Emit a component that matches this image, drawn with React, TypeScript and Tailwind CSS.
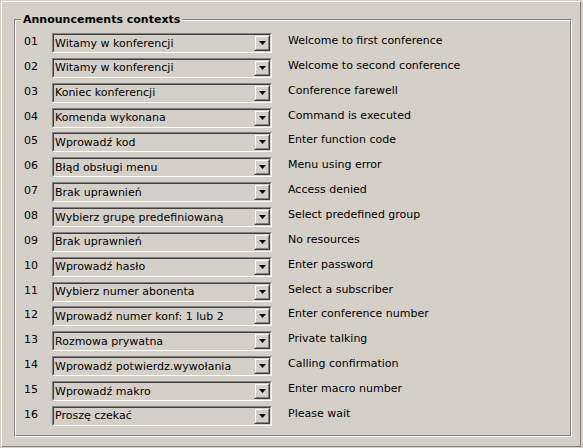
const ROWS: [string, string, string][] = [
  ['01', 'Witamy w konferencji', 'Welcome to first conference'],
  ['02', 'Witamy w konferencji', 'Welcome to second conference'],
  ['03', 'Koniec konferencji', 'Conference farewell'],
  ['04', 'Komenda wykonana', 'Command is executed'],
  ['05', 'Wprowadź kod', 'Enter function code'],
  ['06', 'Błąd obsługi menu', 'Menu using error'],
  ['07', 'Brak uprawnień', 'Access denied'],
  ['08', 'Wybierz grupę predefiniowaną', 'Select predefined group'],
  ['09', 'Brak uprawnień', 'No resources'],
  ['10', 'Wprowadź hasło', 'Enter password'],
  ['11', 'Wybierz numer abonenta', 'Select a subscriber'],
  ['12', 'Wprowadź numer konf: 1 lub 2', 'Enter conference number'],
  ['13', 'Rozmowa prywatna', 'Private talking'],
  ['14', 'Wprowadź potwierdz.wywołania', 'Calling confirmation'],
  ['15', 'Wprowadź makro', 'Enter macro number'],
  ['16', 'Proszę czekać', 'Please wait'],
]

function Combo({ value }: { value: string }) {
  return (
    <div className="w-[220px] h-[20px] border-t border-l border-[#808080] border-r border-b border-r-white border-b-white">
      <div className="h-full flex items-center border-t border-l border-[#404040] border-r border-b border-r-[#d4d0c8] border-b-[#d4d0c8] bg-[#d4d0c8]">
        <div className="flex-1 pl-px truncate leading-none">{value}</div>
        <div className="w-[16px] h-[16px] border-t border-l border-[#d4d0c8] border-r border-b border-r-[#404040] border-b-[#404040]">
          <div className="w-full h-full flex items-center justify-center border-t border-l border-white border-r border-b border-r-[#808080] border-b-[#808080]">
            <svg width="7" height="4" viewBox="0 0 7 4">
              <polygon points="0,0 7,0 3.5,4" fill="#000" />
            </svg>
          </div>
        </div>
      </div>
    </div>
  )
}

export default function App() {
  return (
    <div
      className="w-[583px] h-[448px] bg-[#d4d0c8] pt-px pl-px text-[11px] text-black"
      style={{ fontFamily: '"DejaVu Sans", Verdana, sans-serif' }}
    >
      <div className="w-[580px] h-[446px] border-t border-l border-white border-r border-b border-r-[#808080] border-b-[#808080]">
        <div className="relative ml-[12px] mt-[17px] w-[558px] h-[418px] border-t border-l border-[#808080] border-r border-b border-r-white border-b-white">
          <div className="w-full h-full border-t border-l border-white border-r border-b border-r-[#808080] border-b-[#808080] pl-[8px] pt-[12px]">
            {ROWS.map(([num, value, label]) => (
              <div key={num} className="h-[24.87px] flex items-start">
                <div className="w-[28px] pt-[3px] leading-none">{num}</div>
                <Combo value={value} />
                <div className="pl-[16px] pt-[2px] leading-none">{label}</div>
              </div>
            ))}
          </div>
          <div className="absolute left-[6px] top-[-7px] px-[2px] bg-[#d4d0c8] font-bold leading-[14px]">
            Announcements contexts
          </div>
        </div>
      </div>
    </div>
  )
}
